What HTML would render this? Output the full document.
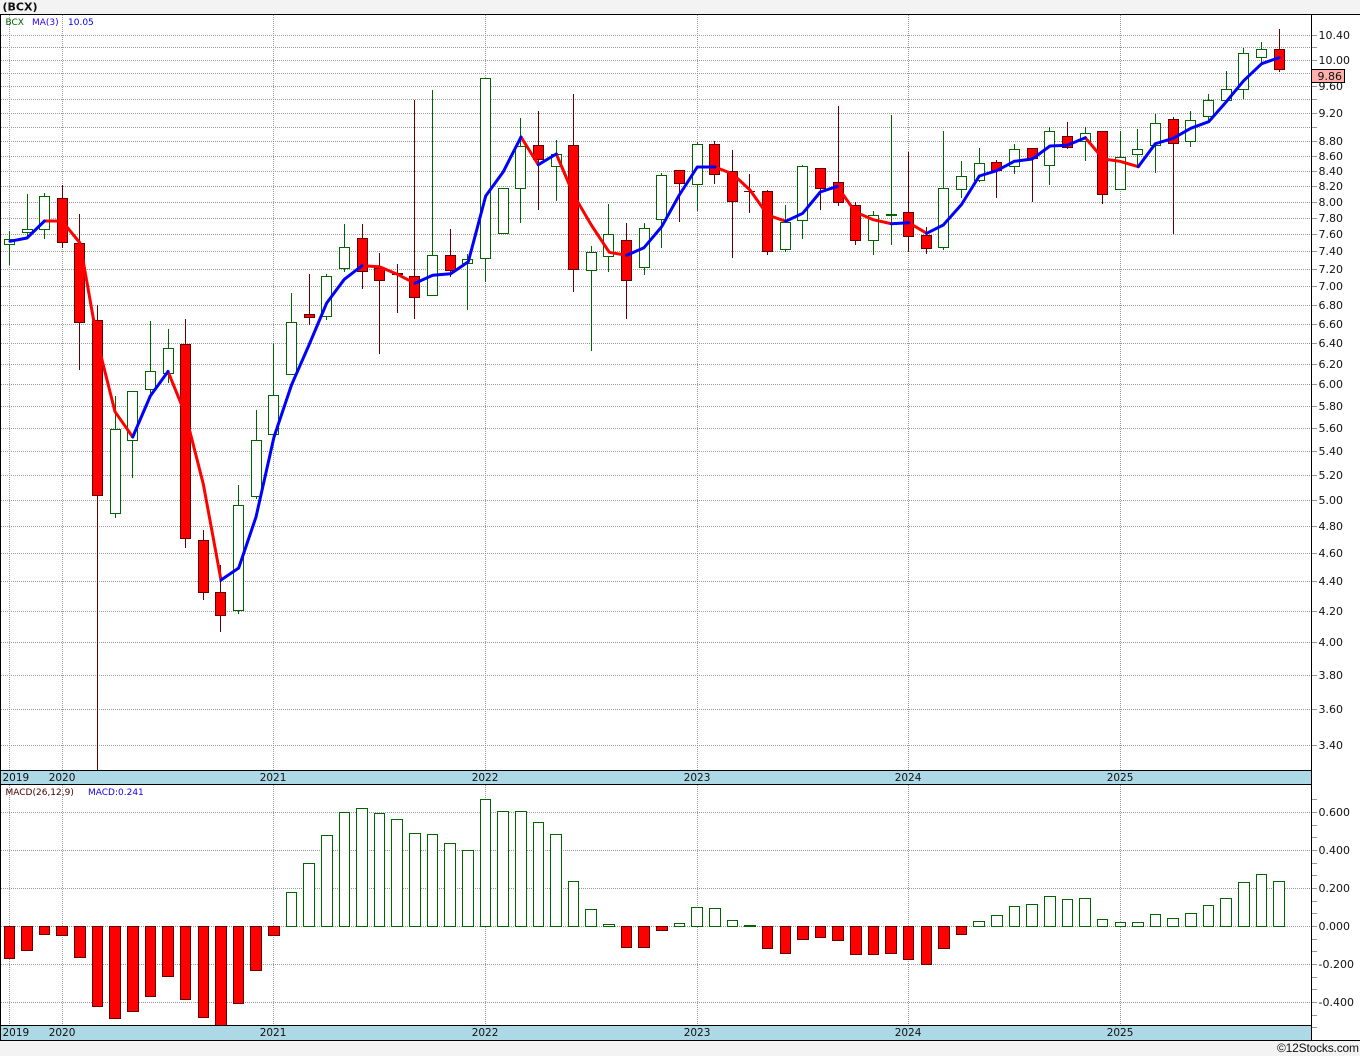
<!DOCTYPE html>
<html lang="en">
<head>
<meta charset="utf-8">
<title>(BCX)</title>
<style>
html,body{margin:0;padding:0;background:#fff}
body{width:1360px;height:1056px;overflow:hidden}
svg{display:block}
text{font-family:"DejaVu Sans","Liberation Sans",sans-serif;fill:#111}
.t{font-size:11px}
.y{font-size:10.5px}
.l{font-size:9px}
</style>
</head>
<body>
<svg width="1360" height="1056" viewBox="0 0 1360 1056" xmlns="http://www.w3.org/2000/svg">
<rect width="1360" height="1056" fill="#fff"/>
<rect width="1360" height="14" fill="#f3f3f3"/>
<rect y="1041" width="1360" height="15" fill="#f3f3f3"/>
<g shape-rendering="crispEdges">
<rect x="1" y="771" width="1310" height="13" fill="#add8e6"/>
<rect x="1" y="1026" width="1310" height="14" fill="#add8e6"/>
<!-- grid -->
<path fill="none" stroke="#999" stroke-dasharray="1 1" d="M1 35.5H1311M1 47.5H1311M1 60.5H1311M1 73.5H1311M1 86.5H1311M1 99.5H1311M1 113.5H1311M1 127.5H1311M1 141.5H1311M1 156.5H1311M1 171.5H1311M1 186.5H1311M1 202.5H1311M1 218.5H1311M1 234.5H1311M1 251.5H1311M1 269.5H1311M1 286.5H1311M1 305.5H1311M1 324.5H1311M1 343.5H1311M1 364.5H1311M1 384.5H1311M1 406.5H1311M1 428.5H1311M1 451.5H1311M1 475.5H1311M1 500.5H1311M1 526.5H1311M1 553.5H1311M1 581.5H1311M1 611.5H1311M1 642.5H1311M1 675.5H1311M1 709.5H1311M1 745.5H1311M1 812.5H1311M1 850.5H1311M1 888.5H1311M1 926.5H1311M1 964.5H1311M1 1002.5H1311M9.5 15V770M62.5 15V770M273.5 15V770M485.5 15V770M697.5 15V770M908.5 15V770M1120.5 15V770M9.5 785V1025M62.5 785V1025M273.5 785V1025M485.5 785V1025M697.5 785V1025M908.5 785V1025M1120.5 785V1025"/>
<!-- axis ticks -->
<path fill="none" stroke="#999" d="M1312 35.5h5M1312 47.5h5M1312 60.5h5M1312 73.5h5M1312 86.5h5M1312 99.5h5M1312 113.5h5M1312 127.5h5M1312 141.5h5M1312 156.5h5M1312 171.5h5M1312 186.5h5M1312 202.5h5M1312 218.5h5M1312 234.5h5M1312 251.5h5M1312 269.5h5M1312 286.5h5M1312 305.5h5M1312 324.5h5M1312 343.5h5M1312 364.5h5M1312 384.5h5M1312 406.5h5M1312 428.5h5M1312 451.5h5M1312 475.5h5M1312 500.5h5M1312 526.5h5M1312 553.5h5M1312 581.5h5M1312 611.5h5M1312 642.5h5M1312 675.5h5M1312 709.5h5M1312 745.5h5M1312 799.5h5M1312 812.5h5M1312 825.5h5M1312 837.5h5M1312 850.5h5M1312 863.5h5M1312 875.5h5M1312 888.5h5M1312 901.5h5M1312 913.5h5M1312 926.5h5M1312 939.5h5M1312 951.5h5M1312 964.5h5M1312 977.5h5M1312 989.5h5M1312 1002.5h5M1312 1015.5h5M1312 1027.5h5"/>
<!-- green wicks -->
<path fill="none" stroke="#006400" d="M9.5 231V265M27.5 194V237M44.5 193V239M115.5 396V518M132.5 391V478M150.5 321V394M168.5 329V383M238.5 485V614M256.5 410V499M273.5 343V440M291.5 293V374M326.5 274V320M344.5 224V272M432.5 90V295M467.5 254V310M485.5 78V282M520.5 118V223M556.5 140V201M591.5 246V351M608.5 204V272M644.5 223V275M661.5 173V248M697.5 142V211M785.5 205V252M802.5 165V239M873.5 211V255M891.5 115V245M943.5 131V250M961.5 161V198M979.5 148V182M1014.5 144V174M1049.5 127V185M1085.5 127V161M1120.5 131V189M1137.5 129V165M1155.5 114V173M1190.5 111V147M1208.5 94V121M1226.5 71V100M1243.5 48V99M1261.5 42V64"/>
<!-- red wicks -->
<path fill="none" stroke="#600" d="M62.5 185V248M79.5 214V370M97.5 305V770M185.5 319V548M203.5 530V600M220.5 565V632M309.5 274V325M362.5 224V289M379.5 253V354M397.5 264V313M414.5 100V319M450.5 229V277M538.5 111V210M573.5 94V292M626.5 223V319M679.5 170V222M714.5 141V184M732.5 150V258M749.5 174V213M767.5 190V255M820.5 168V210M838.5 106V206M855.5 202V245M908.5 152V252M926.5 227V254M996.5 160V198M1032.5 148V202M1067.5 122V149M1102.5 131V204M1173.5 117V234M1279.5 29V72"/>
<!-- green candles -->
<path fill="#fff" stroke="#006400" d="M4.5 239.5h10v5h-10zM22.5 229.5h10v3h-10zM39.5 196.5h10v33h-10zM110.5 429.5h10v84h-10zM127.5 391.5h10v49h-10zM145.5 371.5h10v18h-10zM163.5 348.5h10v25h-10zM233.5 505.5h10v105h-10zM251.5 440.5h10v56h-10zM268.5 395.5h10v39h-10zM286.5 322.5h10v52h-10zM321.5 276.5h10v40h-10zM339.5 247.5h10v21h-10zM427.5 255.5h10v40h-10zM462.5 259.5h10v4h-10zM480.5 78.5h10v180h-10zM498.5 188.5h10v45h-10zM515.5 146.5h10v42h-10zM551.5 154.5h10v12h-10zM586.5 252.5h10v18h-10zM603.5 234.5h10v22h-10zM639.5 228.5h10v39h-10zM656.5 175.5h10v44h-10zM692.5 144.5h10v40h-10zM780.5 222.5h10v27h-10zM797.5 166.5h10v54h-10zM868.5 215.5h10v25h-10zM938.5 188.5h10v59h-10zM956.5 176.5h10v13h-10zM974.5 163.5h10v17h-10zM1009.5 149.5h10v17h-10zM1044.5 131.5h10v34h-10zM1080.5 133.5h10v8h-10zM1115.5 157.5h10v32h-10zM1132.5 149.5h10v5h-10zM1150.5 123.5h10v22h-10zM1185.5 120.5h10v21h-10zM1203.5 100.5h10v16h-10zM1221.5 89.5h10v11h-10zM1238.5 53.5h10v36h-10zM1256.5 49.5h10v8h-10z"/>
<rect x="886" y="214" width="11" height="2" fill="#006400"/>
<!-- red candles -->
<path fill="#f00" stroke="#600" d="M57.5 198.5h10v44h-10zM74.5 243.5h10v79h-10zM92.5 320.5h10v175h-10zM180.5 344.5h10v194h-10zM198.5 540.5h10v52h-10zM215.5 592.5h10v23h-10zM304.5 314.5h10v3h-10zM357.5 238.5h10v33h-10zM374.5 268.5h10v12h-10zM409.5 276.5h10v21h-10zM445.5 255.5h10v15h-10zM533.5 145.5h10v14h-10zM568.5 145.5h10v124h-10zM621.5 240.5h10v40h-10zM674.5 170.5h10v13h-10zM709.5 144.5h10v30h-10zM727.5 171.5h10v30h-10zM762.5 191.5h10v60h-10zM815.5 168.5h10v20h-10zM833.5 182.5h10v20h-10zM850.5 205.5h10v35h-10zM903.5 212.5h10v24h-10zM921.5 235.5h10v13h-10zM991.5 162.5h10v8h-10zM1027.5 148.5h10v10h-10zM1062.5 136.5h10v11h-10zM1097.5 131.5h10v63h-10zM1168.5 119.5h10v24h-10zM1274.5 49.5h10v20h-10z"/>
<rect x="392" y="273" width="11" height="2" fill="#600"/>
<rect x="744" y="191" width="11" height="1" fill="#600"/>
<!-- MACD green -->
<path fill="#fff" stroke="#006400" d="M286.5 892.5h10v34h-10zM303.5 863.5h11v63h-11zM321.5 835.5h11v91h-11zM339.5 812.5h10v114h-10zM356.5 808.5h11v118h-11zM374.5 813.5h10v113h-10zM391.5 819.5h11v107h-11zM409.5 833.5h11v93h-11zM427.5 834.5h10v92h-10zM444.5 843.5h11v83h-11zM462.5 850.5h11v76h-11zM480.5 799.5h10v127h-10zM497.5 811.5h11v115h-11zM515.5 811.5h11v115h-11zM533.5 822.5h10v104h-10zM550.5 834.5h11v92h-11zM568.5 881.5h10v45h-10zM585.5 909.5h11v17h-11zM603.5 924.5h11v2h-11zM674.5 923.5h10v3h-10zM691.5 907.5h11v19h-11zM709.5 908.5h11v18h-11zM727.5 920.5h10v6h-10zM744.5 925.5h11v1h-11zM973.5 921.5h11v5h-11zM991.5 915.5h11v11h-11zM1009.5 906.5h10v20h-10zM1026.5 904.5h11v22h-11zM1044.5 896.5h11v30h-11zM1062.5 899.5h10v27h-10zM1079.5 898.5h11v28h-11zM1097.5 919.5h10v7h-10zM1115.5 922.5h10v4h-10zM1132.5 922.5h11v4h-11zM1150.5 914.5h10v12h-10zM1167.5 918.5h11v8h-11zM1185.5 913.5h11v13h-11zM1203.5 905.5h10v21h-10zM1220.5 898.5h11v28h-11zM1238.5 882.5h11v44h-11zM1256.5 874.5h10v52h-10zM1273.5 881.5h11v45h-11z"/>
<!-- MACD red -->
<path fill="#f00" stroke="#600" d="M4.5 926.5h10v32h-10zM21.5 926.5h11v24h-11zM39.5 926.5h10v8h-10zM56.5 926.5h11v9h-11zM74.5 926.5h11v31h-11zM92.5 926.5h10v80h-10zM109.5 926.5h11v92h-11zM127.5 926.5h11v85h-11zM145.5 926.5h10v70h-10zM162.5 926.5h11v50h-11zM180.5 926.5h10v73h-10zM198.5 926.5h10v91h-10zM215.5 926.5h11v99h-11zM233.5 926.5h10v77h-10zM250.5 926.5h11v44h-11zM268.5 926.5h11v9h-11zM621.5 926.5h10v21h-10zM638.5 926.5h11v21h-11zM656.5 926.5h11v4h-11zM762.5 926.5h10v22h-10zM780.5 926.5h10v27h-10zM797.5 926.5h11v13h-11zM815.5 926.5h10v11h-10zM832.5 926.5h11v14h-11zM850.5 926.5h11v28h-11zM868.5 926.5h10v28h-10zM885.5 926.5h11v27h-11zM903.5 926.5h10v33h-10zM921.5 926.5h10v38h-10zM938.5 926.5h11v22h-11zM956.5 926.5h10v8h-10z"/>
<!-- frame -->
<path fill="none" stroke="#000" d="M0 14.5H1360M1 770.5H1311M1 784.5H1311M1 1025.5H1311M0 1040.5H1360M1311.5 14V1040M.5 14V1041"/>
</g>
<!-- moving average -->
<g fill="none" stroke-width="3" stroke-linejoin="round" stroke-linecap="round">
<g stroke="#f00">
<polyline points="44.5,221 62,221 80,243 97.5,342 115,411.7 132.7,437"/>
<polyline points="168,371.5 185.7,415 203.3,484 221,580"/>
<polyline points="362,265.7 379.3,266.7 397.3,274.3 415,283.3"/>
<polyline points="521,137 538.3,164.7"/>
<polyline points="556.3,154 573.7,195 591.3,225 609.3,252.3 626.7,255.3"/>
<polyline points="715,167 732.7,174 750,190 767.7,215 785.7,221.3"/>
<polyline points="837.3,186.3 855.3,212 873.3,219.7 891.3,223.7"/>
<polyline points="908.7,222.7 926.7,233.3"/>
<polyline points="1085.3,137.7 1103.3,159 1120,161.3 1138.3,166.7"/>
</g>
<g stroke="#00f">
<polyline points="10,241.3 27,238 44.5,221"/>
<polyline points="132.7,437 150.3,396 168,371.5"/>
<polyline points="221,580 238.7,568 256,517 274,437 291.5,385 309,345 326.7,303 344.3,279.3 362,265.7"/>
<polyline points="415,283.3 432.7,275.3 450.7,273.7 468.3,261.7 485.7,196 503.3,171.7 521,137"/>
<polyline points="538.3,164.7 556.3,154"/>
<polyline points="626.7,255.3 644,247.7 661.7,226.7 679.3,195 697.3,167 715,167"/>
<polyline points="785.7,221.3 802.7,213.3 820.3,192 837.3,186.3"/>
<polyline points="891.3,223.7 908.7,222.7"/>
<polyline points="926.7,233.3 943.3,225 961.5,204.5 979.3,176 996.7,170.7 1014.3,161.3 1032.3,159 1050,146 1067.3,145.3 1085.3,137.7"/>
<polyline points="1138.3,166.7 1155.3,143.7 1173.3,138.3 1190.7,128.3 1208.7,121.7 1226.3,101.7 1243.7,80.7 1261.7,63.7 1279,57.7"/>
</g>
</g>
<!-- text -->
<text x="2.5" y="10.5" font-size="11" font-weight="700" style="font-size:11px">(BCX)</text>
<text class="l" x="5.5" y="25" style="fill:#006400">BCX</text>
<text class="l" x="32" y="25" style="fill:#2a00ff">MA(3)</text>
<text class="l" x="68" y="25" style="fill:#0000ee">10.05</text>
<text class="l" x="5.5" y="795" style="fill:#400">MACD(26,12,9)</text>
<text class="l" x="88" y="795" style="fill:#1a00ee">MACD:0.241</text>
<g class="t">
<text x="1318.5" y="39">10.40</text>
<text x="1318.5" y="64">10.00</text>
<text x="1318.5" y="90">9.60</text>
<text x="1318.5" y="117">9.20</text>
<text x="1318.5" y="145">8.80</text>
<text x="1318.5" y="160">8.60</text>
<text x="1318.5" y="175">8.40</text>
<text x="1318.5" y="190">8.20</text>
<text x="1318.5" y="206">8.00</text>
<text x="1318.5" y="222">7.80</text>
<text x="1318.5" y="238">7.60</text>
<text x="1318.5" y="255">7.40</text>
<text x="1318.5" y="273">7.20</text>
<text x="1318.5" y="290">7.00</text>
<text x="1318.5" y="309">6.80</text>
<text x="1318.5" y="328">6.60</text>
<text x="1318.5" y="347">6.40</text>
<text x="1318.5" y="368">6.20</text>
<text x="1318.5" y="388">6.00</text>
<text x="1318.5" y="410">5.80</text>
<text x="1318.5" y="432">5.60</text>
<text x="1318.5" y="455">5.40</text>
<text x="1318.5" y="479">5.20</text>
<text x="1318.5" y="504">5.00</text>
<text x="1318.5" y="530">4.80</text>
<text x="1318.5" y="557">4.60</text>
<text x="1318.5" y="585">4.40</text>
<text x="1318.5" y="615">4.20</text>
<text x="1318.5" y="646">4.00</text>
<text x="1318.5" y="679">3.80</text>
<text x="1318.5" y="713">3.60</text>
<text x="1318.5" y="749">3.40</text>
<text x="1318.5" y="816">0.600</text>
<text x="1318.5" y="854">0.400</text>
<text x="1318.5" y="892">0.200</text>
<text x="1318.5" y="930">0.000</text>
<text x="1318.5" y="968">-0.200</text>
<text x="1318.5" y="1006">-0.400</text>
</g>
<rect x="1311.5" y="69.5" width="33" height="13" fill="#ffb0a8" stroke="#000" shape-rendering="crispEdges"/>
<text class="t" x="1317.5" y="80">9.86</text>
<g class="y">
<text x="2.5" y="781">2019</text>
<text x="48.7" y="781">2020</text>
<text x="259.7" y="781">2021</text>
<text x="471.7" y="781">2022</text>
<text x="683.7" y="781">2023</text>
<text x="894.7" y="781">2024</text>
<text x="1106.7" y="781">2025</text>
<text x="2.5" y="1036">2019</text>
<text x="48.7" y="1036">2020</text>
<text x="259.7" y="1036">2021</text>
<text x="471.7" y="1036">2022</text>
<text x="683.7" y="1036">2023</text>
<text x="894.7" y="1036">2024</text>
<text x="1106.7" y="1036">2025</text>
</g>
<text x="1277" y="1052" textLength="82" lengthAdjust="spacing" style="font-family:'Liberation Sans',sans-serif;font-size:12px">©12Stocks.com</text>
</svg>
</body>
</html>
